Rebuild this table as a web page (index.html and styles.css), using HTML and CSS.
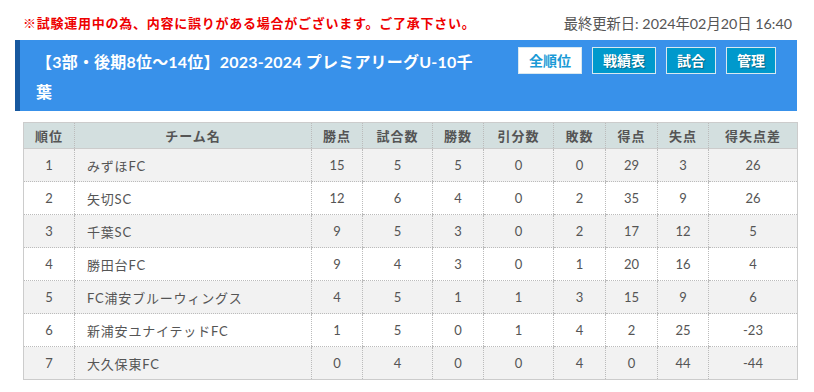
FILE: index.html
```html
<!DOCTYPE html>
<html lang="ja">
<head>
<meta charset="utf-8">
<link rel="stylesheet" href="styles.css">
</head>
<body>
<div class="page">
  <div class="topline">
    <p class="notice">※試験運用中の為、内容に誤りがある場合がございます。ご了承下さい。</p>
    <p class="updated">最終更新日: 2024年02月20日 16:40</p>
  </div>
  <div class="titlebar">
    <h1 class="title">【3部・後期8位～14位】2023-2024 プレミアリーグU-10千葉</h1>
    <div class="btns">
      <a class="btn btn-active">全順位</a>
      <a class="btn">戦績表</a>
      <a class="btn">試合</a>
      <a class="btn">管理</a>
    </div>
  </div>
  <table class="standings">
    <colgroup>
      <col class="c51"><col class="c237"><col class="c51"><col class="c70"><col class="c51"><col class="c70"><col class="c52"><col class="c52"><col class="c51"><col class="c89">
    </colgroup>
    <thead>
      <tr><th>順位</th><th>チーム名</th><th>勝点</th><th>試合数</th><th>勝数</th><th>引分数</th><th>敗数</th><th>得点</th><th>失点</th><th>得失点差</th></tr>
    </thead>
    <tbody>
      <tr><td>1</td><td class="team">みずほFC</td><td>15</td><td>5</td><td>5</td><td>0</td><td>0</td><td>29</td><td>3</td><td>26</td></tr>
      <tr><td>2</td><td class="team">矢切SC</td><td>12</td><td>6</td><td>4</td><td>0</td><td>2</td><td>35</td><td>9</td><td>26</td></tr>
      <tr><td>3</td><td class="team">千葉SC</td><td>9</td><td>5</td><td>3</td><td>0</td><td>2</td><td>17</td><td>12</td><td>5</td></tr>
      <tr><td>4</td><td class="team">勝田台FC</td><td>9</td><td>4</td><td>3</td><td>0</td><td>1</td><td>20</td><td>16</td><td>4</td></tr>
      <tr><td>5</td><td class="team">FC浦安ブルーウィングス</td><td>4</td><td>5</td><td>1</td><td>1</td><td>3</td><td>15</td><td>9</td><td>6</td></tr>
      <tr><td>6</td><td class="team">新浦安ユナイテッドFC</td><td>1</td><td>5</td><td>0</td><td>1</td><td>4</td><td>2</td><td>25</td><td>-23</td></tr>
      <tr><td>7</td><td class="team">大久保東FC</td><td>0</td><td>4</td><td>0</td><td>0</td><td>4</td><td>0</td><td>44</td><td>-44</td></tr>
    </tbody>
  </table>
</div>
</body>
</html>
```

FILE: styles.css
```css
* { box-sizing: border-box; }
body {
  margin: 0;
  background: #fff;
  font-family: Lato, "Noto Sans CJK JP", sans-serif;
  color: #555;
}
.page {
  width: 782px;
  margin-left: 15px;
}
.topline {
  display: flex;
  justify-content: space-between;
  align-items: center;
  height: 40px;
  padding: 4px 5px 0 8px;
}
.notice {
  margin: 0;
  color: #ee0000;
  font-size: 13px;
  font-weight: bold;
  letter-spacing: 0.75px;
}
.updated {
  margin: 0;
  color: #555;
  font-size: 14.3px;
}
.titlebar {
  display: flex;
  justify-content: space-between;
  align-items: flex-start;
  background: #3891ea;
  border-left: 5px solid #17589f;
  height: 71px;
  padding: 7px 21px 4px 16px;
}
.title {
  margin: 0;
  width: 446px;
  color: #fff;
  font-size: 16px;
  font-weight: bold;
  line-height: 30px;
  letter-spacing: 0.2px;
}
.btns {
  display: flex;
  gap: 10px;
}
.btn {
  display: block;
  height: 27px;
  line-height: 25px;
  padding: 0 10px;
  border: 1px solid #d8e8f0;
  background: #0099cc;
  color: #fff;
  font-size: 14px;
  font-weight: bold;
  text-shadow: 1px 1px 1px rgba(0,0,0,0.35);
}
.btn-active {
  background: #fff;
  color: #1a9ad6;
  text-shadow: none;
}
.standings {
  margin: 11px 0 0 8px;
  width: 774px;
  border-collapse: collapse;
  table-layout: fixed;
  border: 1px solid #ccc;
  font-size: 13px;
}
.c51 { width: 51px; }
.c52 { width: 52px; }
.c70 { width: 70px; }
.c89 { width: 89px; }
.c237 { width: 237px; }
.standings th {
  height: 26px;
  background: #d3dfdf;
  font-weight: bold;
  color: #555;
  letter-spacing: 1px;
  border-left: 1px dotted #bbb;
  border-bottom: 1px solid #ccc;
  padding: 0;
}
.standings td {
  height: 33px;
  text-align: center;
  border-left: 1px dotted #bbb;
  border-bottom: 1px dotted #bbb;
  padding: 0;
}
.standings td.team {
  text-align: left;
  padding-left: 12px;
  letter-spacing: 0.8px;
}
.standings tbody tr:nth-child(odd) { background: #f2f2f2; }
.standings tbody tr:nth-child(even) { background: #fff; }
```
